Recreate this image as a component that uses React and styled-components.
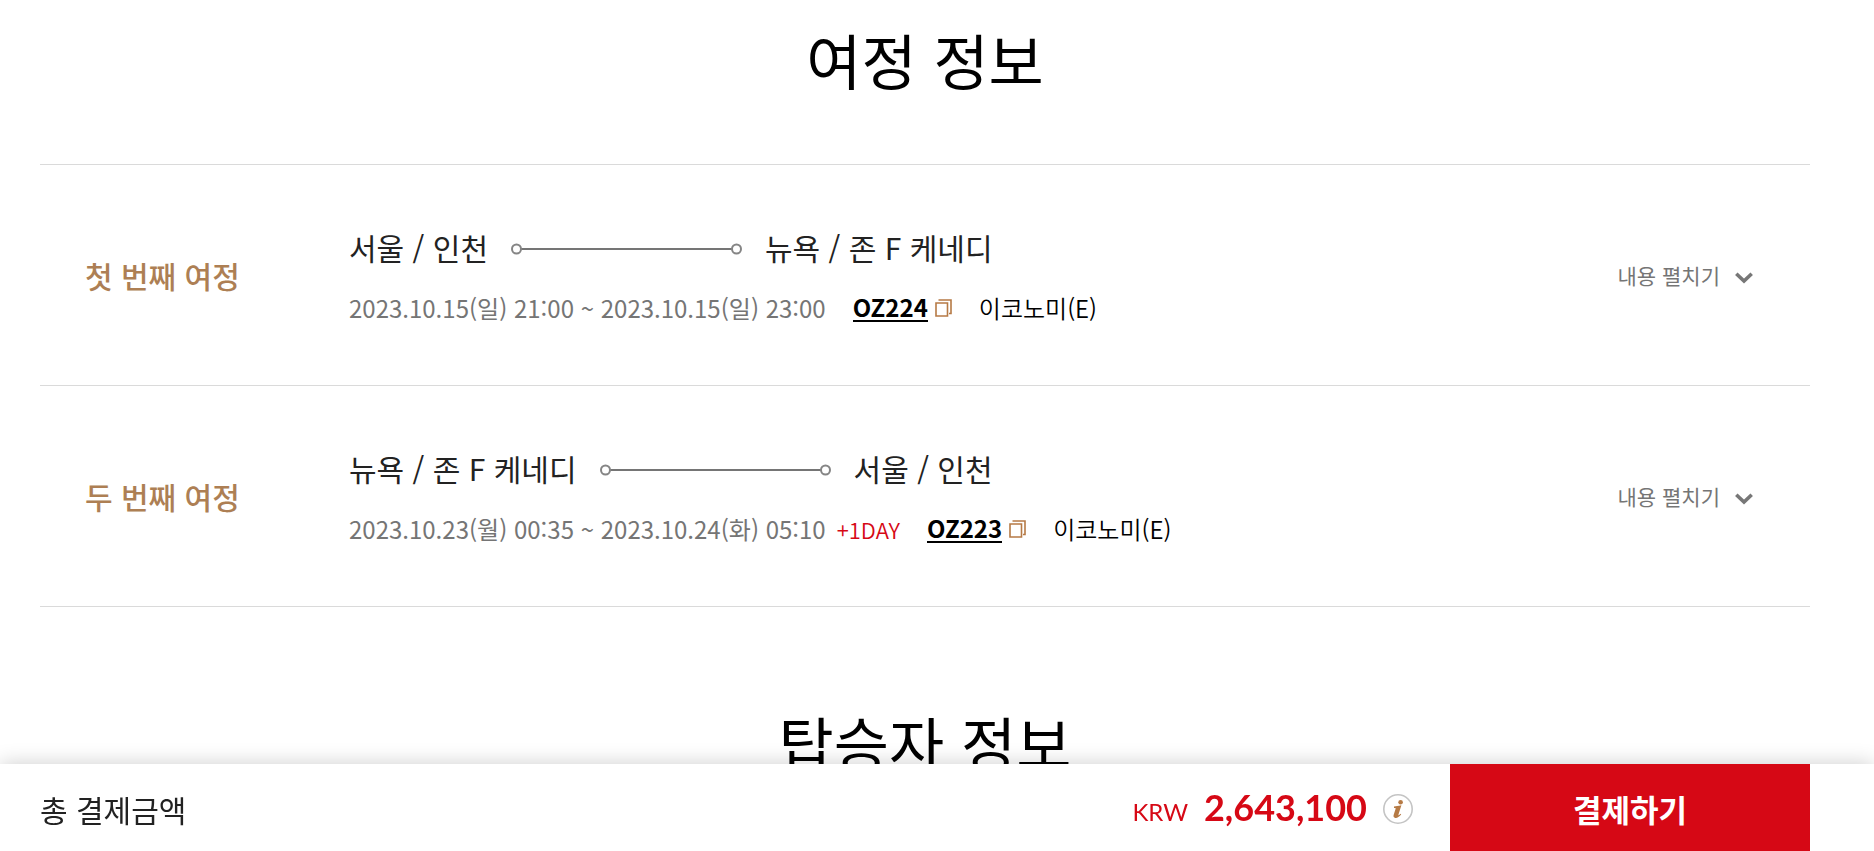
import React from "react";
import styled, { createGlobalStyle } from "styled-components";

const GlobalStyle = createGlobalStyle`
  * { box-sizing: border-box; }
  body {
    margin: 0;
    background: #fff;
    color: #000;
    font-family: "Noto Sans CJK KR", "Noto Sans", sans-serif;
  }
  h2, h3, p, ul { margin: 0; padding: 0; }
  button { font-family: inherit; border: 0; cursor: pointer; }
`;

const Page = styled.main`
  padding: 15px 64px 0 40px;
`;

const SectionTitle = styled.h2`
  font-size: 60px;
  line-height: 88px;
  font-weight: 400;
  text-align: center;
`;

const TripList = styled.ul`
  list-style: none;
  margin: 61px 0 91px;
  border-top: 1px solid #dadada;
`;

const TripRow = styled.li`
  display: flex;
  align-items: center;
  padding: 57px 57px 57px 45px;
  border-bottom: 1px solid #dadada;
`;

const TripName = styled.h3`
  flex: 0 0 264px;
  font-size: 30px;
  line-height: 44px;
  font-weight: 500;
  color: #ad7f54;
`;

const TripBody = styled.div`
  flex: 1;
  padding-top: 3px;
`;

const Route = styled.p`
  display: flex;
  align-items: center;
  gap: 23px;
  font-size: 30px;
  line-height: 44px;
  color: #222;

  svg { margin-top: 4px; }
`;

const Schedule = styled.div`
  display: flex;
  align-items: center;
  margin-top: 19px;
  font-size: 24px;
  line-height: 40px;
`;

const Period = styled.span`
  color: #757575;
`;

const DayShift = styled.span`
  margin-left: 11px;
  font-size: 22px;
  font-weight: 350;
  color: #d60815;
`;

const FlightLink = styled.a`
  display: flex;
  align-items: center;
  gap: 7px;
  margin: 0 27px;
  font-weight: 700;
  color: #000;
  text-decoration: none;
`;

const FlightCode = styled.span`
  line-height: 26px;
  border-bottom: 2px solid #000;
`;

const Cabin = styled.span`
  font-weight: 350;
`;

const ExpandButton = styled.button`
  display: flex;
  align-items: center;
  gap: 15px;
  padding: 0;
  background: none;
  font-size: 21px;
  line-height: 32px;
  color: #757575;

  svg { margin-top: 6px; }
`;

const PayBar = styled.footer`
  position: fixed;
  left: 0;
  right: 0;
  bottom: 0;
  display: flex;
  align-items: center;
  height: 87px;
  padding: 0 64px 0 40px;
  background: #fff;
  box-shadow: 0 0 20px rgba(0, 0, 0, 0.2);
`;

const PayLabel = styled.span`
  flex: 1;
  padding-top: 2px;
  font-size: 30px;
  line-height: 44px;
  color: #222;
`;

const Price = styled.strong`
  display: flex;
  align-items: baseline;
  gap: 16px;
  padding-top: 4px;
  font-family: Lato, sans-serif;
  font-size: 36px;
  line-height: 44px;
  font-weight: 700;
  color: #d60815;
`;

const Currency = styled.span`
  font-size: 24px;
  font-weight: 400;
`;

const InfoButton = styled.button`
  display: flex;
  margin: 2px 37px 0 16px;
  padding: 0;
  background: none;
`;

const PayButton = styled.button`
  align-self: stretch;
  width: 360px;
  padding-top: 2px;
  background: #d60815;
  color: #fff;
  font-size: 31px;
  font-weight: 700;
`;

const RouteLine = () => (
  <svg width="231" height="12" viewBox="0 0 231 12" fill="none" stroke="#757575" aria-hidden="true">
    <path d="M10 6H221" strokeWidth="2" />
    <circle cx="5.5" cy="6" r="4.5" strokeWidth="2" stroke="#858585" />
    <circle cx="225.5" cy="6" r="4.5" strokeWidth="2" stroke="#858585" />
  </svg>
);

const PopupIcon = () => (
  <svg width="17" height="18" viewBox="0 0 17 18" fill="none" stroke="#b67a45" strokeWidth="1.6" aria-hidden="true">
    <path d="M1 4H12.5V17H1Z" />
    <path d="M3.5 1H16V14.5H14" />
  </svg>
);

const ChevronIcon = () => (
  <svg width="18" height="12" viewBox="0 0 18 12" fill="none" stroke="#777" strokeWidth="3.6" aria-hidden="true">
    <path d="M1.3 1.7L9 9L16.7 1.7" />
  </svg>
);

const InfoIcon = () => (
  <svg width="30" height="30" viewBox="0 0 30 30" fill="none" aria-hidden="true">
    <circle cx="15" cy="15" r="14.2" stroke="#c4c4c4" strokeWidth="1.6" />
    <circle cx="17.6" cy="8.2" r="2.3" fill="#b67a45" />
    <path d="M11 12.6C13.2 12.2 15 11.8 18.4 11.2L15.4 20.8C15.2 21.7 15.8 21.4 17.4 19.8L18.2 20.6C15.8 23.5 13.8 24.3 12.1 23.9C10.4 23.4 10.3 22.3 10.7 20.8L12.7 14.5C12.6 14 12 14 11 14Z" fill="#b67a45" />
  </svg>
);

const trips = [
  {
    name: "첫 번째 여정",
    from: "서울 / 인천",
    to: "뉴욕 / 존 F 케네디",
    period: "2023.10.15(일) 21:00 ~ 2023.10.15(일) 23:00",
    flight: "OZ224",
    cabin: "이코노미(E)",
  },
  {
    name: "두 번째 여정",
    from: "뉴욕 / 존 F 케네디",
    to: "서울 / 인천",
    period: "2023.10.23(월) 00:35 ~ 2023.10.24(화) 05:10",
    dayShift: "+1DAY",
    flight: "OZ223",
    cabin: "이코노미(E)",
  },
];

export default function App() {
  return (
    <div lang="ko">
      <GlobalStyle />
      <Page>
        <SectionTitle>여정 정보</SectionTitle>
        <TripList>
          {trips.map((trip) => (
            <TripRow key={trip.name}>
              <TripName>{trip.name}</TripName>
              <TripBody>
                <Route>
                  <span>{trip.from}</span>
                  <RouteLine />
                  <span>{trip.to}</span>
                </Route>
                <Schedule>
                  <Period>{trip.period}</Period>
                  {trip.dayShift && <DayShift>{trip.dayShift}</DayShift>}
                  <FlightLink href="#flight">
                    <FlightCode>{trip.flight}</FlightCode>
                    <PopupIcon />
                  </FlightLink>
                  <Cabin>{trip.cabin}</Cabin>
                </Schedule>
              </TripBody>
              <ExpandButton type="button">
                내용 펼치기
                <ChevronIcon />
              </ExpandButton>
            </TripRow>
          ))}
        </TripList>
        <SectionTitle>탑승자 정보</SectionTitle>
      </Page>
      <PayBar>
        <PayLabel>총 결제금액</PayLabel>
        <Price>
          <Currency>KRW</Currency>
          2,643,100
        </Price>
        <InfoButton type="button" aria-label="결제금액 안내">
          <InfoIcon />
        </InfoButton>
        <PayButton type="button">결제하기</PayButton>
      </PayBar>
    </div>
  );
}
